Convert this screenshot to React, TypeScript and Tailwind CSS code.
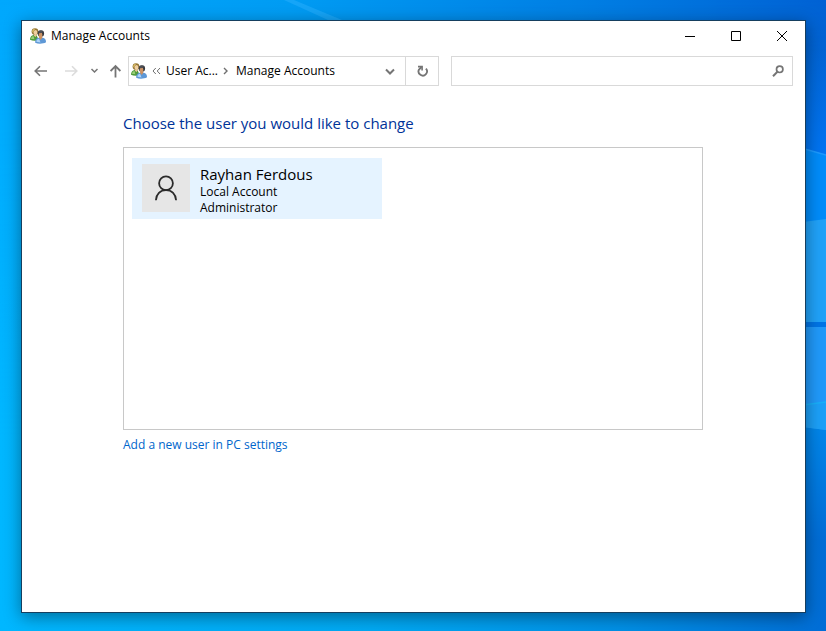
import type { ReactNode } from "react";

function Wallpaper() {
  return (
    <svg
      className="absolute inset-0 h-full w-full"
      viewBox="0 0 826 631"
      preserveAspectRatio="none"
      aria-hidden="true"
    >
      <defs>
        <linearGradient id="sky" x1="0" y1="0" x2="1" y2="0">
          <stop offset="0" stopColor="#00a8fd" />
          <stop offset="0.35" stopColor="#009cf3" />
          <stop offset="0.7" stopColor="#007fe4" />
          <stop offset="1" stopColor="#0062d4" />
        </linearGradient>
        <linearGradient id="floor" x1="0" y1="0" x2="1" y2="0">
          <stop offset="0" stopColor="#00b7ff" />
          <stop offset="0.45" stopColor="#00a9f3" />
          <stop offset="0.75" stopColor="#0090e6" />
          <stop offset="1" stopColor="#006dd6" />
        </linearGradient>
        <linearGradient id="fade" x1="0" y1="0" x2="0" y2="1">
          <stop offset="0" stopColor="#000" />
          <stop offset="0.7" stopColor="#fff" />
        </linearGradient>
        <mask id="lower">
          <rect width="826" height="631" fill="url(#fade)" />
        </mask>
        <linearGradient id="beam" x1="0" y1="0" x2="0" y2="1">
          <stop offset="0" stopColor="#0074f2" stopOpacity="0" />
          <stop offset="1" stopColor="#0074f2" />
        </linearGradient>
        <linearGradient id="beamLow" x1="0" y1="0" x2="0" y2="1">
          <stop offset="0" stopColor="#0086ea" />
          <stop offset="1" stopColor="#006dd6" />
        </linearGradient>
      </defs>
      <rect width="826" height="631" fill="url(#sky)" />
      <rect width="826" height="631" fill="url(#floor)" mask="url(#lower)" />
      <path d="M284 0h10l72 30h-16Z" fill="#35b4ff" opacity="0.4" />
      <rect x="780" y="50" width="46" height="104" fill="url(#beam)" />
      <path d="M780 142 826 155v67h-46Z" fill="#008cfa" />
      <path d="m780 142 46 13" stroke="#1c9aff" strokeWidth="1.5" />
      <path d="m780 225 46-6v103h-46Z" fill="#20a2f9" />
      <rect x="780" y="322" width="46" height="5" fill="#0074e6" />
      <path d="M780 425h46v115h-46Z" fill="url(#beamLow)" />
      <path d="M780 327h46v103l-46-6Z" fill="#2099fa" />
      <path d="m780 408 46-6v28l-46-6Z" fill="#1ca0f8" />
      <path d="m780 408 46-6" stroke="#18b0fa" strokeWidth="1.5" />
    </svg>
  );
}

function UsersIcon() {
  return (
    <svg width="16" height="16" viewBox="0 0 16 16" aria-hidden="true" className="shrink-0">
      <path d="M0 11.8C0 9 1.4 7.300 3.600 7h2.800l2.200 4.500-2 1.200c-2.400.4-4.600.1-6.600-.9Z" fill="#4f9a3c" />
      <path d="M.9 10.800c.3-1.700 1.200-2.600 2.600-2.900l.9 3.300Z" fill="#9bd078" />
      <path d="m4 7.4 1.300 1.800 1.400-1.900-.4-1.200H4.200Z" fill="#e9c592" />
      <circle cx="5" cy="3.600" r="3.400" fill="#937535" />
      <path d="M2.200 3.600C2.400 1.200 4 .4 5.500.7 4.200 1.400 3.400 2.600 3.200 5Z" fill="#e3c76c" />
      <ellipse cx="5.500" cy="4.500" rx="1.900" ry="2.500" fill="#f0cfa0" />
      <path d="M5.200 14.800c-.3-3.200 1.300-4.900 4-5h2.900c2.500.1 4 1.700 3.900 4.500-2.800 1.700-7.700 2-10.800.5Z" fill="#5e98d6" />
      <path d="M6.400 13.800c.1-1.800 1-2.800 2.700-3l1.400 3.800Z" fill="#aed4f8" />
      <path d="m9 9.700 1.700 2.200 1.700-2.200-.4-1.400H9.400Z" fill="#c98f60" />
      <ellipse cx="10.900" cy="5.500" rx="3.200" ry="3.200" fill="#36373c" />
      <ellipse cx="10.500" cy="6.900" rx="1.900" ry="2.600" fill="#cd9465" />
      <path d="M8.200 5.300c1.700.2 3.400-.1 4.600-1l-.4-1.600-3 .1Z" fill="#4d4f56" />
    </svg>
  );
}

function IconButton({ label, children }: { label: string; children: ReactNode }) {
  return (
    <button
      type="button"
      aria-label={label}
      className="flex h-7 shrink-0 items-center justify-center text-[#757575]"
    >
      {children}
    </button>
  );
}

function CaptionButton({ label, d }: { label: string; d: string }) {
  return (
    <button type="button" aria-label={label} className="flex h-7 w-[46px] items-center justify-center">
      <svg width="10" height="10" viewBox="0 0 10 10" fill="none" stroke="#000" aria-hidden="true">
        <path d={d} />
      </svg>
    </button>
  );
}

function TitleBar() {
  return (
    <header className="flex h-[30px] items-center pl-2">
      <UsersIcon />
      <h1 className="ml-[5px] flex-1 text-xs">Manage Accounts</h1>
      <div className="flex">
        <CaptionButton label="Minimize" d="M0 5.5h10" />
        <CaptionButton label="Maximize" d="M.5.5h9v9h-9Z" />
        <CaptionButton label="Close" d="m0 0 10 10M10 0 0 10" />
      </div>
    </header>
  );
}

function NavBar() {
  return (
    <div className="flex items-center px-3 pt-[5px]">
      <nav aria-label="History" className="flex w-[94px] shrink-0 items-center">
        <IconButton label="Back">
          <svg width="14" height="12" viewBox="0 0 14 12" fill="none" stroke="currentColor" strokeWidth="1.6" aria-hidden="true">
            <path d="M13 6H1.500M6 1.200 1.200 6 6 10.800" />
          </svg>
        </IconButton>
        <button type="button" aria-label="Forward" disabled className="ml-4 flex h-7 items-center text-[#dcdcdc]">
          <svg width="14" height="12" viewBox="0 0 14 12" fill="none" stroke="currentColor" strokeWidth="1.6" aria-hidden="true">
            <path d="M1 6h11.500M8 1.200 12.800 6 8 10.800" />
          </svg>
        </button>
        <div className="ml-3 flex gap-3">
          <IconButton label="Recent locations">
            <svg width="8" height="6" viewBox="0 0 8 6" fill="none" stroke="currentColor" strokeWidth="1.5" aria-hidden="true">
              <path d="m1.500 1 3 3 3-3" />
            </svg>
          </IconButton>
          <IconButton label="Up">
            <svg width="12" height="14" viewBox="0 0 12 14" fill="none" stroke="currentColor" strokeWidth="1.8" aria-hidden="true">
              <path d="M5.500 13.500V2M.6 7l4.900-5 4.900 5" />
            </svg>
          </IconButton>
        </div>
      </nav>

      <div className="grid flex-1 grid-cols-[311fr_342fr] gap-3">
        <div className="flex h-[30px] min-w-0 items-center border border-[#d9d9d9] pl-[2px] text-xs">
          <UsersIcon />
          <button type="button" aria-label="Parent folders" className="mx-[5px] text-[#6f6f6f]">
            <svg width="9" height="8" viewBox="0 0 9 8" fill="none" stroke="currentColor" aria-hidden="true">
              <path d="M3.800 1 1 4l2.800 3M8 1 5.200 4 8 7" />
            </svg>
          </button>
          <button type="button" className="whitespace-nowrap">User Ac...</button>
          <svg width="5" height="8" viewBox="0 0 5 8" fill="none" stroke="#6f6f6f" strokeWidth="1.4" aria-hidden="true" className="mr-2 ml-[5px] shrink-0">
            <path d="m1 1 3 3-3 3" />
          </svg>
          <button type="button" className="truncate">Manage Accounts</button>
          <div className="ml-auto flex pr-[10px]">
            <IconButton label="Previous locations">
              <svg width="10" height="7" viewBox="0 0 10 7" fill="none" stroke="currentColor" strokeWidth="2" aria-hidden="true">
                <path d="m1 1.500 4 4 4-4" />
              </svg>
            </IconButton>
          </div>
          <div className="flex w-[33px] shrink-0 justify-center border-l border-[#d9d9d9]">
            <IconButton label="Refresh">
              <svg width="12" height="12" viewBox="0 0 12 12" fill="none" stroke="currentColor" strokeWidth="1.8" aria-hidden="true">
                <path d="M9.900 3.600A4.200 4.200 0 1 1 3 4.500L5.600 2" />
                <path d="M2 1.600h4.100v4" strokeWidth="1.600" />
              </svg>
            </IconButton>
          </div>
        </div>

        <div className="flex h-[30px] min-w-0 items-center border border-[#d9d9d9] pr-2">
          <input type="text" aria-label="Search" className="h-full min-w-0 flex-1 px-2 text-xs outline-none" />
          <IconButton label="Search">
            <svg width="12" height="12" viewBox="0 0 12 12" fill="none" stroke="currentColor" aria-hidden="true">
              <circle cx="7.700" cy="4.300" r="3.200" strokeWidth="1.700" />
              <path d="M5.400 6.800 1 11.200" strokeWidth="2" />
            </svg>
          </IconButton>
        </div>
      </div>
    </div>
  );
}

function AccountTile() {
  return (
    <button type="button" className="flex h-[61px] w-[250px] items-start bg-[#e5f3ff] pt-[6px] pl-[10px] text-left">
      <span className="flex size-12 items-center justify-center bg-[#e6e6e6]">
        <svg width="22" height="26" viewBox="0 0 22 26" fill="none" stroke="#2b2b2b" strokeWidth="1.800" aria-hidden="true">
          <circle cx="11" cy="8.300" r="6.900" />
          <path d="M.9 25.200C1.300 19.200 5.200 15.200 11 15.200s9.700 4 10.100 10" />
        </svg>
      </span>
      <span className="ml-[10px] flex flex-col">
        <span className="text-[15px] leading-5">Rayhan Ferdous</span>
        <span className="text-xs leading-4">Local Account</span>
        <span className="text-xs leading-4">Administrator</span>
      </span>
    </button>
  );
}

export default function App() {
  return (
    <div className="relative flex min-h-screen flex-col pt-5 pr-5 pb-[18px] pl-[21px] font-['Open_Sans','Noto_Sans',sans-serif] text-black">
      <Wallpaper />
      <div className="relative flex flex-1 flex-col border border-[#163f5f] bg-white shadow-[0_4px_16px_rgba(0,0,0,0.4)]">
        <TitleBar />
        <NavBar />
        <main className="flex flex-col items-start pt-[27px] pr-[102px] pl-[101px]">
          <h2 className="text-[15px] leading-5 text-[#003399]">Choose the user you would like to change</h2>
          <div className="mt-[14px] h-[283px] w-full border border-[#c8c8c8] pt-[10px] pl-2">
            <AccountTile />
          </div>
          <a href="#add-user" className="mt-[6px] text-xs leading-[18px] text-[#0066cc]">
            Add a new user in PC settings
          </a>
        </main>
      </div>
    </div>
  );
}
